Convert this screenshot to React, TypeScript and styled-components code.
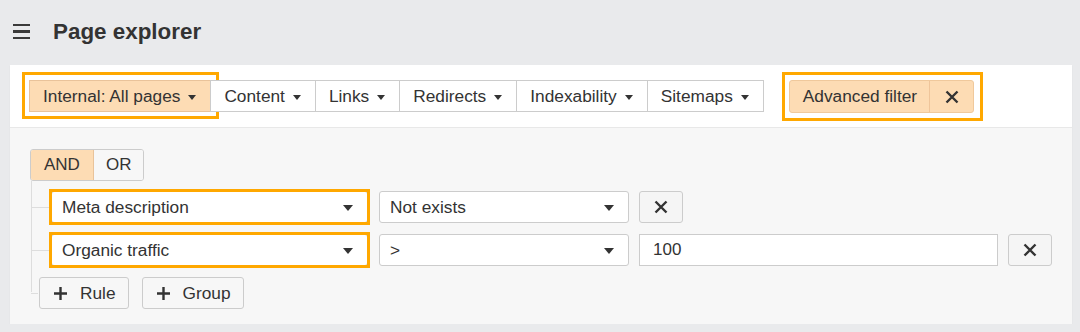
import React from 'react';
import styled, { createGlobalStyle, css } from 'styled-components';

const GlobalStyle = createGlobalStyle`
  html, body {
    margin: 0;
    padding: 0;
    background: #e9eaec;
    font-family: 'Liberation Sans', Arial, sans-serif;
    color: #333;
  }
  * { box-sizing: border-box; }
`;

const highlight = css`
  &::after {
    content: '';
    position: absolute;
    border: 3px solid #ffa800;
    pointer-events: none;
  }
`;

const Header = styled.header`
  height: 65px;
  display: flex;
  align-items: center;
  padding: 0 0 2px 13px;
`;

const Burger = styled.span`
  display: flex;
  flex-direction: column;
  gap: 4px;
  width: 17px;
  margin-right: 23px;
  span {
    height: 2.5px;
    background: #3a3a3a;
  }
`;

const Title = styled.h1`
  margin: 0;
  font-size: 22.4px;
  font-weight: bold;
  color: #333;
`;

const Card = styled.section`
  margin: 0 8px 0 10px;
  background: #fff;
  box-shadow: 0 1px 1px rgba(0, 0, 0, 0.08);
`;

const Toolbar = styled.div`
  height: 63px;
  display: flex;
  align-items: flex-start;
  padding: 15px 0 0 19px;
  border-bottom: 1px solid #e8e8e8;
`;

const TabGroup = styled.div`
  display: flex;
`;

const Tab = styled.button<{ $active?: boolean; $hl?: boolean }>`
  position: relative;
  height: 32px;
  display: flex;
  align-items: center;
  gap: 8px;
  padding: 0 14px 0 13px;
  font: inherit;
  font-size: 17.3px;
  color: #333;
  background: ${p => (p.$active ? '#fddcb4' : '#fff')};
  border: 1px solid ${p => (p.$active ? '#e9c39a' : '#ccc')};
  margin-left: -1px;
  cursor: pointer;
  &:first-child { margin-left: 0; }
  ${p => p.$hl && highlight}
  &::after { inset: -9px -9px -8px -8px; }
`;

const Caret = styled.span<{ $big?: boolean }>`
  width: 0;
  height: 0;
  border-left: ${p => (p.$big ? 5 : 4.5)}px solid transparent;
  border-right: ${p => (p.$big ? 5 : 4.5)}px solid transparent;
  border-top: ${p => (p.$big ? 6 : 5)}px solid #333;
  margin-top: 2px;
`;

const FilterPill = styled.div`
  position: relative;
  margin-left: 25px;
  height: 33px;
  display: flex;
  background: #fddcb4;
  border: 1px solid #f0c99c;
  border-radius: 3px;
  font-size: 17.3px;
  ${highlight}
  &::after { inset: -9px -10px -9px -8px; }
`;

const PillLabel = styled.span`
  display: flex;
  align-items: center;
  padding: 0 12px 0 13px;
  border-right: 1px solid #efc59a;
`;

const PillClose = styled.span`
  width: 43px;
  display: flex;
  align-items: center;
  justify-content: center;
`;

const Panel = styled.div`
  background: #f7f7f7;
  padding: 21px 20px 15px 20px;
`;

const Toggle = styled.div`
  display: inline-flex;
  height: 32px;
  border: 1px solid #ccc;
  border-radius: 3px;
  overflow: hidden;
  font-size: 17px;
`;

const ToggleItem = styled.span<{ $active?: boolean }>`
  display: flex;
  align-items: center;
  padding: 0 ${p => (p.$active ? 13 : 12)}px;
  background: ${p => (p.$active ? '#fddcb4' : '#f7f7f7')};
  border-right: ${p => (p.$active ? '1px solid #e9c39a' : 'none')};
`;

const Tree = styled.div`
  position: relative;
  display: flex;
  flex-direction: column;
  gap: 10px;
  padding-top: 10px;
  &::before {
    content: '';
    position: absolute;
    left: 1px;
    top: 0;
    height: 111px;
    border-left: 1px solid #ddd;
  }
`;

const Branch = styled.div<{ $indent: number; $gap?: number }>`
  position: relative;
  display: flex;
  gap: ${p => p.$gap ?? 10}px;
  padding-left: ${p => p.$indent}px;
  &::before {
    content: '';
    position: absolute;
    left: 1px;
    top: 50%;
    width: ${p => p.$indent - 2}px;
    border-top: 1px solid #ddd;
  }
  & + & { margin-top: 1px; }
`;

const Select = styled.div<{ $w: number; $hl?: boolean }>`
  position: relative;
  width: ${p => p.$w}px;
  height: 32px;
  display: flex;
  align-items: center;
  justify-content: space-between;
  padding: 0 14px 0 10px;
  background: #fff;
  border: 1px solid #ccc;
  border-radius: 3px;
  font-size: 17.3px;
  ${p => p.$hl && highlight}
  &::after { inset: -3px; }
  & + & { margin-left: 1px; }
`;

const Input = styled.div<{ $w: number }>`
  width: ${p => p.$w}px;
  height: 32px;
  display: flex;
  align-items: center;
  padding: 0 13px;
  background: #fff;
  border: 1px solid #ccc;
  font-size: 17px;
`;

const IconButton = styled.button`
  width: 44px;
  height: 32px;
  display: flex;
  align-items: center;
  justify-content: center;
  background: #f5f5f5;
  border: 1px solid #ccc;
  border-radius: 3px;
  padding: 0;
  cursor: pointer;
`;

const AddButton = styled.button`
  height: 32px;
  display: flex;
  align-items: center;
  gap: 12px;
  padding: 0 12px 0 13px;
  font: inherit;
  font-size: 17.3px;
  color: #333;
  background: #f7f7f7;
  border: 1px solid #ccc;
  border-radius: 3px;
  cursor: pointer;
`;

const Cross = () => (
  <svg width="14" height="14" viewBox="0 0 14 14">
    <path d="M1.5 1.5 L12.5 12.5 M12.5 1.5 L1.5 12.5" stroke="#333" strokeWidth="2.4" />
  </svg>
);

const Plus = () => (
  <svg width="15" height="15" viewBox="0 0 15 15">
    <path d="M7.5 1 V14 M1 7.5 H14" stroke="#333" strokeWidth="2.4" />
  </svg>
);

const tabs = ['Content', 'Links', 'Redirects', 'Indexability', 'Sitemaps'];

export default function App() {
  return (
    <>
      <GlobalStyle />
      <Header>
        <Burger><span /><span /><span /></Burger>
        <Title>Page explorer</Title>
      </Header>
      <Card>
        <Toolbar>
          <TabGroup>
            <Tab $active $hl>Internal: All pages <Caret /></Tab>
            {tabs.map(t => (
              <Tab key={t}>{t} <Caret /></Tab>
            ))}
          </TabGroup>
          <FilterPill>
            <PillLabel>Advanced filter</PillLabel>
            <PillClose><Cross /></PillClose>
          </FilterPill>
        </Toolbar>
        <Panel>
          <Toggle>
            <ToggleItem $active>AND</ToggleItem>
            <ToggleItem>OR</ToggleItem>
          </Toggle>
          <Tree>
            <Branch $indent={21}>
              <Select $w={317} $hl>Meta description <Caret $big /></Select>
              <Select $w={250}>Not exists <Caret $big /></Select>
              <IconButton><Cross /></IconButton>
            </Branch>
            <Branch $indent={21}>
              <Select $w={317} $hl>Organic traffic <Caret $big /></Select>
              <Select $w={250}>&gt; <Caret $big /></Select>
              <Input $w={359}>100</Input>
              <IconButton><Cross /></IconButton>
            </Branch>
            <Branch $indent={9} $gap={13}>
              <AddButton><Plus /> Rule</AddButton>
              <AddButton><Plus /> Group</AddButton>
            </Branch>
          </Tree>
        </Panel>
      </Card>
    </>
  );
}
